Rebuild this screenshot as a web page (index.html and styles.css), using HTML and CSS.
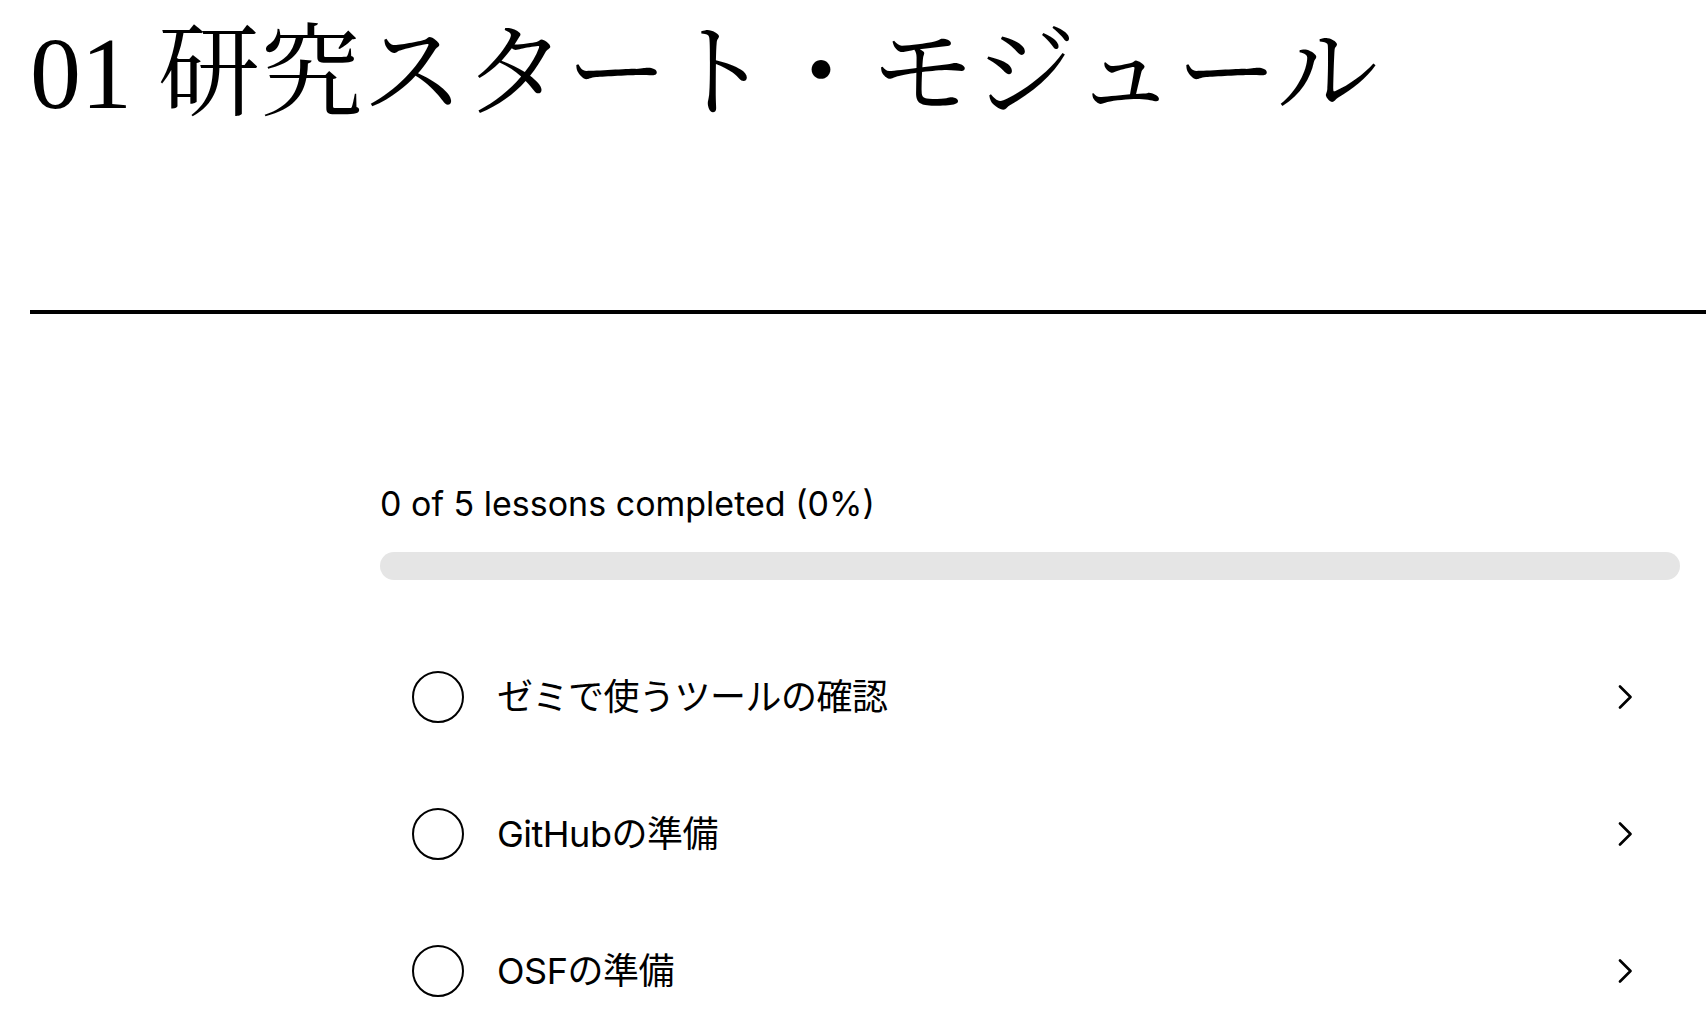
FILE: index.html
```html
<!DOCTYPE html>
<html lang="ja">
<head>
<meta charset="utf-8">
<title>01 研究スタート・モジュール</title>
<link rel="stylesheet" href="styles.css">
</head>
<body>
<div class="page">
  <header class="module-header">
    <h1 class="module-title"><span class="module-number">01</span> 研究スタート・モジュール</h1>
  </header>
  <hr class="divider">
  <main class="content">
    <section class="progress">
      <p class="progress-text">0 of 5 lessons completed (0%)</p>
      <div class="progress-track"><div class="progress-fill" style="width:0%"></div></div>
    </section>
    <ul class="lessons">
      <li class="lesson">
        <span class="lesson-check"></span>
        <span class="lesson-title">ゼミで使うツールの確認</span>
        <svg class="chevron" viewBox="0 0 14 24" width="14" height="24"><polyline points="2,1.5 12.5,12 2,22.5"/></svg>
      </li>
      <li class="lesson">
        <span class="lesson-check"></span>
        <span class="lesson-title">GitHubの準備</span>
        <svg class="chevron" viewBox="0 0 14 24" width="14" height="24"><polyline points="2,1.5 12.5,12 2,22.5"/></svg>
      </li>
      <li class="lesson">
        <span class="lesson-check"></span>
        <span class="lesson-title">OSFの準備</span>
        <svg class="chevron" viewBox="0 0 14 24" width="14" height="24"><polyline points="2,1.5 12.5,12 2,22.5"/></svg>
      </li>
    </ul>
  </main>
</div>
</body>
</html>
```

FILE: styles.css
```css
html, body {
  margin: 0;
  padding: 0;
  background: #ffffff;
  color: #000000;
}

body {
  font-family: Inter, "Noto Sans CJK JP", sans-serif;
  overflow: hidden;
}

.page {
  padding-left: 30px;
}

.module-header {
  height: 250px;
  padding-top: 14px;
  box-sizing: border-box;
}

.module-title {
  margin: 0;
  font-family: "Noto Serif CJK JP", "Liberation Serif", serif;
  font-weight: 400;
  font-size: 102px;
  line-height: 100px;
  letter-spacing: 0;
  white-space: nowrap;
}

.module-number {
  font-family: "Liberation Serif", serif;
  font-weight: 400;
}

.divider {
  margin: 60px 0 0 0;
  border: 0;
  height: 4px;
  background: #000000;
}

.content {
  margin: 0 26px 0 350px;
  padding-top: 168px;
}

.progress-text {
  margin: 0;
  font-size: 34px;
  line-height: 44px;
}

.progress-track {
  margin-top: 26px;
  height: 28px;
  border-radius: 14px;
  background: #e5e5e5;
  overflow: hidden;
}

.progress-fill {
  height: 100%;
  background: #000000;
}

.lessons {
  list-style: none;
  margin: 48px 0 0 0;
  padding: 0;
}

.lesson {
  display: flex;
  align-items: center;
  height: 137px;
  padding: 0 48px 0 32px;
}

.lesson-check {
  flex: none;
  width: 48px;
  height: 48px;
  border: 2px solid #000000;
  border-radius: 50%;
}

.lesson-title {
  flex: 1;
  margin-left: 33px;
  font-size: 36px;
  line-height: 1;
  letter-spacing: -0.5px;
}

.chevron {
  flex: none;
  fill: none;
  stroke: #000000;
  stroke-width: 2.6;
  stroke-linecap: round;
  stroke-linejoin: round;
}
```
